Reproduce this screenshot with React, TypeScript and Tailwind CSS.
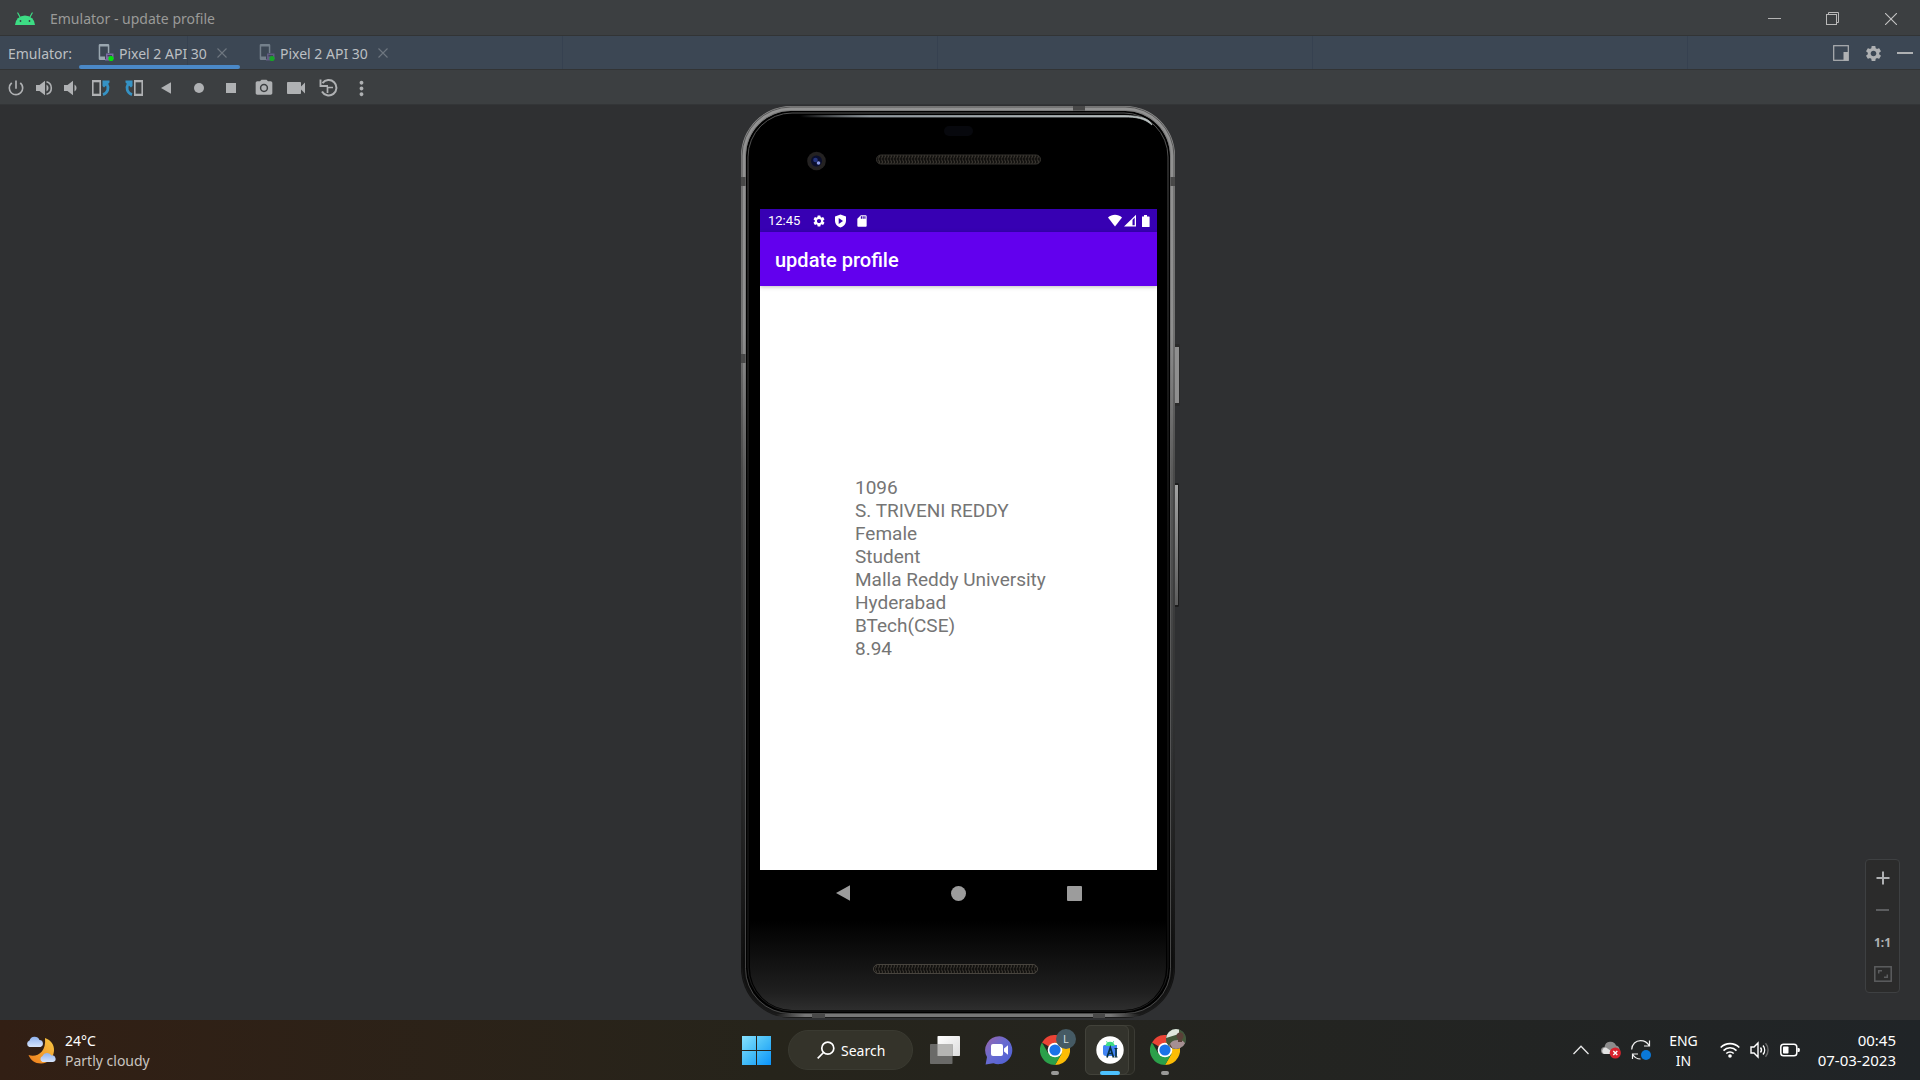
import React from "react";
import {
  MdPowerSettingsNew,
  MdPhotoCamera,
  MdVideocam,
  MdMoreVert,
  MdSettings,
  MdSdCard,
} from "react-icons/md";

const profile = [
  "1096",
  "S. TRIVENI REDDY",
  "Female",
  "Student",
  "Malla Reddy University",
  "Hyderabad",
  "BTech(CSE)",
  "8.94",
];

function IconButton({ label, className, children }: { label: string; className: string; children: React.ReactNode }) {
  return (
    <button type="button" aria-label={label} className={`flex shrink-0 items-center justify-center ${className}`}>
      {children}
    </button>
  );
}

function AndroidHead() {
  return (
    <svg width="20" height="14" viewBox="0 0 20 14" aria-hidden="true">
      <path d="M0 13a10 9.6 0 0 1 20 0z" fill="#3ddc84" />
      <path d="M5 5 2.8 1M15 5l2.2-4" stroke="#3ddc84" strokeWidth="1.2" strokeLinecap="round" />
      <circle cx="5.5" cy="9" r="0.9" fill="#3c3f41" />
      <circle cx="14.5" cy="9" r="0.9" fill="#3c3f41" />
    </svg>
  );
}

function DeviceIcon({ dim }: { dim?: boolean }) {
  return (
    <svg width="17" height="18" viewBox="0 0 17 18" aria-hidden="true" className={dim ? "opacity-60" : ""}>
      <path
        fillRule="evenodd"
        d="M2 0h8a1.300 1.300 0 0 1 1.300 1.300V9H9.800V2.500H2.200v10H7V16H2A1.300 1.300 0 0 1 .7 14.700V1.300A1.300 1.300 0 0 1 2 0z"
        fill="#9aa7b0"
      />
      <path d="M8 9.500h7.500V15H8z" fill="#7d6aa5" />
      <path d="M9.500 11h4.500v1.500H9.500z" fill="#3c4754" />
      <rect x="7" y="15" width="4" height="1.500" fill="#7d6aa5" />
      <circle cx="13" cy="14.500" r="2.600" fill="#00e30b" />
    </svg>
  );
}

function Tab({ active }: { active?: boolean }) {
  return (
    <div className="relative flex w-[161px] items-center pl-[19px]">
      <button type="button" role="tab" aria-selected={!!active} className="flex items-center gap-1">
        <DeviceIcon dim={!active} />
        <span className="w-[90px] text-left whitespace-nowrap">Pixel 2 API 30</span>
      </button>
      <IconButton label="Close tab" className="ml-2 size-[10px]">
        <svg width="10" height="10" viewBox="0 0 10 10" stroke="#6f7780" strokeWidth="1.100" aria-hidden="true">
          <path d="M.5.5l9 9M9.500.5l-9 9" />
        </svg>
      </IconButton>
      {active && <span className="absolute inset-x-0 bottom-0 z-10 h-1 rounded-full bg-[#4a88c7]" />}
    </div>
  );
}

function Speaker({ loud }: { loud?: boolean }) {
  return (
    <svg width="18" height="16" viewBox="0 0 18 16" fill="#afb1b3" aria-hidden="true">
      <path d="M1 5h3.500L10 .8v14.400L4.500 11H1z" />
      <path d="M11.500 4.500a4 4 0 0 1 0 7z" />
      {loud && <path d="M11.500 1.800a6.400 6.400 0 0 1 0 12.400" fill="none" stroke="#afb1b3" strokeWidth="1.600" />}
    </svg>
  );
}

function Rotate({ right }: { right?: boolean }) {
  return (
    <svg width="20" height="16" viewBox="0 0 20 16" aria-hidden="true" className={right ? "-scale-x-100" : ""}>
      <rect x="1.800" y="1.500" width="7.400" height="13" fill="none" stroke="#afb1b3" strokeWidth="1.600" />
      <path d="M1 1h9M1 15h9" stroke="#afb1b3" strokeWidth="2" />
      <path d="M12 14.600c5-1.600 6.200-6.600 3.800-11" fill="none" stroke="#3592c4" strokeWidth="2.800" />
      <path d="M11.500.6h7v1.800L13 7.600 11.500 6z" fill="#3592c4" />
    </svg>
  );
}

function PhoneFrame() {
  return (
    <svg viewBox="0 0 440 915" preserveAspectRatio="none" aria-hidden="true" className="absolute inset-0 h-full w-full">
      <defs>
        <linearGradient id="rim" x1="0" y1="0" x2="0" y2="1">
          <stop offset="0" stopColor="#929292" />
          <stop offset="0.250" stopColor="#8e8e8e" />
          <stop offset="0.400" stopColor="#5a5a5a" />
          <stop offset="0.700" stopColor="#333435" />
          <stop offset="0.850" stopColor="#1c1c1c" />
          <stop offset="0.940" stopColor="#0c0c0c" />
          <stop offset="1" stopColor="#1a1a1a" />
        </linearGradient>
        <linearGradient id="bottomRim" x1="0" y1="0" x2="1" y2="0">
          <stop offset="0" stopColor="#777777" stopOpacity="0" />
          <stop offset="0.080" stopColor="#777777" />
          <stop offset="0.920" stopColor="#777777" />
          <stop offset="1" stopColor="#777777" stopOpacity="0" />
        </linearGradient>
        <linearGradient id="glass" x1="0" y1="0" x2="0" y2="1">
          <stop offset="0" stopColor="#000000" />
          <stop offset="0.900" stopColor="#000000" />
          <stop offset="0.980" stopColor="#1f1f1f" />
          <stop offset="1" stopColor="#2e2e2e" />
        </linearGradient>
        <linearGradient id="shine" x1="0" y1="0" x2="1" y2="0">
          <stop offset="0" stopColor="#8d959b" stopOpacity="0" />
          <stop offset="0.200" stopColor="#8d959b" />
          <stop offset="1" stopColor="#b9c0c0" />
        </linearGradient>
        <linearGradient id="sideEdge" x1="0" y1="0" x2="0" y2="1">
          <stop offset="0" stopColor="#555" />
          <stop offset="0.500" stopColor="#1c1c1c" />
          <stop offset="1" stopColor="#1c1c1c" />
        </linearGradient>
        <linearGradient id="key" x1="0" y1="0" x2="0" y2="1">
          <stop offset="0" stopColor="#a2a2a2" />
          <stop offset="1" stopColor="#5c5c5c" />
        </linearGradient>
        <pattern id="mesh" width="3" height="6" patternUnits="userSpaceOnUse">
          <rect width="3" height="6" fill="#12110f" />
          <path d="M0.500 0.500l1 2.500-1 2.500" stroke="#47433b" strokeWidth="0.900" fill="none" />
        </pattern>
      </defs>
      <rect x="433" y="239" width="7" height="62" rx="1.500" fill="#2a2a2a" />
      <rect x="435" y="242" width="4" height="56" fill="#8f8f8f" />
      <rect x="433" y="378" width="6" height="124" rx="1.500" fill="#1d1d1d" />
      <rect x="434" y="380" width="4" height="120" fill="url(#key)" />
      <rect x="1" y="1" width="434" height="912" rx="50" fill="url(#rim)" />
      <rect x="2" y="2" width="432" height="910" rx="49" fill="none" stroke="#1e1e1e" strokeOpacity="0.500" />
      <rect x="36" y="909" width="364" height="3" fill="url(#bottomRim)" />
      <path d="M1 72h6v9H1zM429 72h6v9h-6zM333 1h12v5h-12zM1 249h5v9H1zM72 909h13v4H72zM353 909h12v4h-12z" fill="#484848" />
      <rect x="6" y="6" width="424" height="902" rx="45" fill="#000" />
      <rect x="5.500" y="5.500" width="425" height="903" rx="45" fill="none" stroke="#6a6a6a" strokeOpacity="0.600" />
      <rect x="8" y="8" width="420" height="898" rx="44" fill="none" stroke="url(#sideEdge)" />
      <rect x="10" y="10" width="416" height="895" rx="42" fill="url(#glass)" />
      <path d="M60 10.500H384C400 10.500 410 14 412 20C404 13 396 12 384 12H60z" fill="url(#shine)" stroke="url(#shine)" strokeWidth="0.800" />
      <rect x="204" y="21" width="29" height="10" rx="5" fill="#07080d" />
      <circle cx="76.500" cy="56" r="9.300" fill="#242222" />
      <circle cx="76.500" cy="56" r="5.500" fill="#0a0e2c" />
      <circle cx="75.500" cy="55" r="2.300" fill="#25357e" />
      <circle cx="78.500" cy="58" r="1.800" fill="#8b9be8" />
      <rect x="136.500" y="50" width="164" height="9" rx="4.500" fill="url(#mesh)" stroke="#35332f" />
      <rect x="133.500" y="859.500" width="164" height="9" rx="4.500" fill="url(#mesh)" stroke="#48443e" />
    </svg>
  );
}

function Phone() {
  return (
    <div className="relative flex w-[440px] flex-col pt-[104px] pr-[23px] pl-5">
      <PhoneFrame />
      <div className="relative flex min-h-[661px] flex-col bg-white font-[Roboto,sans-serif]">
        <div className="flex h-[23px] items-center bg-[#3700b3] pr-[7px] pl-2 text-white">
          <span className="w-[44px] text-[13px]">12:45</span>
          <MdSettings size={14} className="mr-2" aria-hidden="true" />
          <svg width="13" height="14" viewBox="0 0 13 14" className="mr-2" aria-hidden="true">
            <path fillRule="evenodd" d="M6.500.4 12 2.500v4.300c0 3-2.300 5.800-5.500 6.700C3.300 12.600 1 9.800 1 6.800V2.500zM4.700 4v6l4.300-3z" fill="#fff" />
          </svg>
          <MdSdCard size={14} aria-hidden="true" />
          <svg width="42" height="14" viewBox="0 0 42 14" className="ml-auto" fill="#fff" aria-hidden="true">
            <path d="M0 3.500C4-.2 10-.2 14 3.500L7 12.500z" />
            <path d="M16 12.500 28 .8v11.700zM24.500 6v5.300h2.200V3.600z" fillRule="evenodd" />
            <path d="M34 2.500h2V1h3v1.500h2a.6.6 0 0 1 .6.6v9.300a.6.6 0 0 1-.6.6h-6.400a.6.6 0 0 1-.6-.6z" />
          </svg>
        </div>
        <header className="flex h-[54px] items-center bg-[#6200ee] pt-[2px] pl-[15px] shadow-[0_1px_4px_rgba(0,0,0,0.25)]">
          <h1 className="text-[20px] font-medium text-white">update profile</h1>
        </header>
        <ul className="mt-[190px] ml-[95px] text-[19px] leading-[23px] text-[#757575]">
          {profile.map((line) => (
            <li key={line}>{line}</li>
          ))}
        </ul>
      </div>
      <nav aria-label="Device navigation" className="relative flex h-[46px] items-center justify-between px-[67px]">
        <IconButton label="Back" className="size-8">
          <svg width="16" height="16" viewBox="0 0 16 16" aria-hidden="true">
            <path d="M1 8 15 .3v15.400z" fill="#9c9c9c" />
          </svg>
        </IconButton>
        <IconButton label="Home" className="size-8">
          <span className="size-[15px] rounded-full bg-[#9c9c9c]" />
        </IconButton>
        <IconButton label="Overview" className="size-8">
          <span className="size-[15px] rounded-[1px] bg-[#9c9c9c]" />
        </IconButton>
      </nav>
    </div>
  );
}

function Chrome() {
  return (
    <svg width="30" height="30" viewBox="0 0 30 30" aria-hidden="true">
      <path d="M15 15 2 7.500A15 15 0 0 1 28 7.500H15z" fill="#ea4335" />
      <path d="M15 15 28 7.500A15 15 0 0 1 15 30l6.500-11.200z" fill="#fbbc05" />
      <path d="M15 15l6.500 3.800L15 30A15 15 0 0 1 2 7.500l6.500 11.300z" fill="#2ba04a" />
      <path d="M15 7.500h13a15 15 0 0 1 1.400 3H18z" fill="#fbbc05" />
      <circle cx="15" cy="15" r="7.300" fill="#fff" />
      <circle cx="15" cy="15" r="5.600" fill="#1a73e8" />
    </svg>
  );
}

function ChromeButton({ badge, label }: { badge: React.ReactNode; label: string }) {
  return (
    <button type="button" aria-label={label} className="relative flex h-[50px] w-9 shrink-0 items-center">
      <Chrome />
      <span className="absolute top-1 right-0 flex size-5 items-center justify-center overflow-hidden rounded-full bg-[#455a64] text-[11px] text-[#cfd8dc]">
        {badge}
      </span>
      <span className="absolute bottom-0 left-[11px] h-1 w-2 rounded-full bg-[#9a9a98]" />
    </button>
  );
}

function Taskbar() {
  return (
    <footer className="grid h-[60px] grid-cols-[1fr_auto_1fr] items-center bg-linear-to-r from-[#321f14] via-[#26241b] via-40% to-[#202427] text-[14px] leading-5 text-white">
      <button type="button" className="flex items-center gap-2 justify-self-start pt-px pl-[26px] text-left">
        <svg width="31" height="30" viewBox="0 0 31 30" aria-hidden="true">
          <defs>
            <linearGradient id="moon" x1="1" y1="0" x2="0" y2="1">
              <stop offset="0" stopColor="#f6c945" />
              <stop offset="1" stopColor="#ef7a1a" />
            </linearGradient>
            <linearGradient id="cloud" x1="0" y1="0" x2="0" y2="1">
              <stop offset="0" stopColor="#8fb2ee" />
              <stop offset="1" stopColor="#d6e4fb" />
            </linearGradient>
          </defs>
          <path d="M19 2c6 2 9.500 7 9 13-.6 7-6 12.500-13 12.500C9 27.500 4.500 24 2.500 19c8 2.500 18-2 16.500-17z" fill="url(#moon)" />
          <path d="M3.500 11a3.400 3.400 0 0 1 0-6.500A5.300 5.300 0 0 1 13.500 4a3.600 3.600 0 0 1 1 7z" fill="url(#cloud)" />
          <path d="M16.500 26a3.200 3.200 0 0 1 0-6 5 5 0 0 1 9-.5 3.300 3.300 0 0 1 1.500 6.500z" fill="url(#cloud)" />
        </svg>
        <span className="flex flex-col">
          <span>24°C</span>
          <span className="text-[#c9c4c0]">Partly cloudy</span>
        </span>
      </button>

      <div className="flex items-center">
        <IconButton label="Start" className="h-[50px] w-[45px]">
          <svg width="29" height="29" viewBox="0 0 29 29" aria-hidden="true">
            <defs>
              <linearGradient id="win" gradientUnits="userSpaceOnUse" x1="0" y1="0" x2="29" y2="29">
                <stop offset="0" stopColor="#86e1ff" />
                <stop offset="0.500" stopColor="#45bdf7" />
                <stop offset="1" stopColor="#0a93fb" />
              </linearGradient>
            </defs>
            <path d="M0 0h14v14H0zM15 0h14v14H15zM0 15h14v14H0zM15 15h14v14H15z" fill="url(#win)" />
          </svg>
        </IconButton>
        <button
          type="button"
          className="ml-[9px] flex h-10 w-[125px] items-center gap-[6px] rounded-full border border-[#3a3a31] bg-[#34332a] pl-7"
        >
          <svg width="18" height="18" viewBox="0 0 18 18" fill="none" stroke="#fff" strokeWidth="1.700" aria-hidden="true">
            <circle cx="10.800" cy="7.200" r="6" />
            <path d="M6.500 11.500.7 17.300" />
          </svg>
          <span className="pt-px">Search</span>
        </button>
        <IconButton label="Task view" className="ml-[17px] h-[50px] w-[30px]">
          <svg width="30" height="28" viewBox="0 0 30 28" aria-hidden="true">
            <defs>
              <linearGradient id="pane" x1="0" y1="0" x2="1" y2="1">
                <stop offset="0" stopColor="#ffffff" />
                <stop offset="1" stopColor="#dcdcdc" />
              </linearGradient>
            </defs>
            <rect x="7.500" y="0" width="22.500" height="20" rx="0.800" fill="url(#pane)" />
            <rect x="0" y="8" width="22.500" height="20" rx="0.800" fill="#6a6a68" />
            <rect x="7.500" y="8" width="15" height="12" fill="#b5b5b3" />
          </svg>
        </IconButton>
        <IconButton label="Chat" className="ml-[25px] h-[50px] w-[29px]">
          <svg width="29" height="29" viewBox="0 0 29 29" aria-hidden="true">
            <defs>
              <linearGradient id="chat" x1="0" y1="0" x2="1" y2="1">
                <stop offset="0" stopColor="#9a64a8" />
                <stop offset="0.450" stopColor="#6a6bd0" />
                <stop offset="1" stopColor="#4a5fd6" />
              </linearGradient>
            </defs>
            <path d="M14.500.2A14 14 0 1 1 8.500 27.300L.6 28.400 2 21A14 14 0 0 1 14.500.2z" fill="url(#chat)" />
            <rect x="6" y="8" width="12" height="12" rx="2" fill="#fff" />
            <path d="M19 12.500 23 9.300v9.400l-4-3.200z" fill="#fff" />
          </svg>
        </IconButton>
        <div className="ml-[26px]">
          <ChromeButton label="Google Chrome, profile L" badge="L" />
        </div>
        <button
          type="button"
          aria-label="Android Studio"
          className="relative ml-[9px] h-[50px] w-[50px] rounded-md border border-[#3b3b34] bg-[#2a2a23]"
        >
          <span className="absolute -top-px -left-px flex h-[50px] w-[44px] items-center justify-center rounded-md border border-[#42423a] bg-[#33332c]">
            <svg width="28" height="28" viewBox="0 0 28 28" className="ml-[6px]" aria-hidden="true">
              <circle cx="14" cy="14" r="13.700" fill="#fff" />
              <path d="M7 10.500A1.500 1.500 0 0 1 8.500 9H21v11H10a3 3 0 0 1-3-3z" fill="#4285f4" />
              <path d="M9.500 10a4.600 4.300 0 0 1 9.200 0z" fill="#3ddc84" />
              <path d="M10.500 5.200l1 2M17.700 5.200l-1 2" stroke="#3ddc84" strokeWidth="0.900" />
              <path d="M11 21.500 14.300 11.500 17.500 21.500M12.300 17.500h4" stroke="#073042" strokeWidth="1.700" fill="none" />
              <path d="M18.500 12h3v1h-.7v7.500h.7v1h-3v-1h.7V13h-.7z" fill="#073042" />
            </svg>
          </span>
          <span className="absolute -bottom-px left-[14px] h-1 w-5 rounded-full bg-[#4cc2ff]" />
        </button>
        <div className="ml-[15px]">
          <ChromeButton
            label="Google Chrome, second profile"
            badge={
              <svg width="20" height="20" viewBox="0 0 20 20" aria-hidden="true">
                <rect width="20" height="20" fill="#44583a" />
                <path d="M0 0h13v5L0 9z" fill="#dfe6dc" />
                <path d="M3 20c0-6 3-9 9-9s8 3 8 9z" fill="#a58f92" />
                <circle cx="14" cy="7" r="3.500" fill="#5a4038" />
                <path d="M12 10h4v3h-4z" fill="#5a4038" />
                <path d="M4 15l3 5H4z" fill="#5a4038" />
              </svg>
            }
          />
        </div>
      </div>

      <div className="flex items-center justify-self-end pr-6">
        <IconButton label="Show hidden icons" className="h-10 w-4">
          <svg width="16" height="10" viewBox="0 0 16 10" fill="none" stroke="#e8e8e8" strokeWidth="1.300" aria-hidden="true">
            <path d="M.5 9 8 1.200 15.500 9" />
          </svg>
        </IconButton>
        <IconButton label="OneDrive" className="ml-3 h-10 w-5">
          <svg width="20" height="18" viewBox="0 0 20 18" aria-hidden="true">
            <path d="M3.500 13a3.500 3.500 0 0 1 0-7A6 6 0 0 1 15 4.500a4.500 4.500 0 0 1 1 8.500z" fill="#8c8c8c" />
            <path d="M3 13a3.500 3.500 0 0 1 2-6.500L13 12l-3 1z" fill="#e2e2e2" />
            <circle cx="14.300" cy="12" r="5.600" fill="#d9232e" />
            <path d="m12.300 10 4 4M16.300 10l-4 4" stroke="#fff" strokeWidth="1.400" />
          </svg>
        </IconButton>
        <IconButton label="Updates" className="ml-[10px] h-10 w-5">
          <svg width="20" height="22" viewBox="0 0 20 22" fill="none" stroke="#f0f0f0" strokeWidth="1.200" aria-hidden="true">
            <path d="M.7 10.500C1 5 4.800 1.700 9.500 1.700c4 0 7 2 8.700 5M18.500 1.500V7H13M1.500 20v-5H7M1.700 15.500C3.500 18.500 6 20 9.500 20" />
            <circle cx="15" cy="16" r="5" fill="#0a78d8" stroke="none" />
          </svg>
        </IconButton>
        <button type="button" aria-label="Input language" className="ml-4 w-[33px] pt-px text-center">
          ENG
          <br />
          IN
        </button>
        <button type="button" aria-label="Network, volume and battery" className="ml-5 flex w-20 items-center justify-between">
          <svg width="20" height="16" viewBox="0 0 20 16" fill="none" stroke="#fff" strokeWidth="1.600" aria-hidden="true">
            <path d="M.7 5.500a13 13 0 0 1 18.600 0M3.500 8.600a9 9 0 0 1 13 0M6.300 11.500a5.200 5.200 0 0 1 7.400 0" />
            <circle cx="10" cy="14" r="1.800" fill="#fff" stroke="none" />
          </svg>
          <svg width="20" height="18" viewBox="0 0 20 18" fill="none" stroke="#fff" strokeWidth="1.400" aria-hidden="true">
            <path d="M1 6h3l4-4v14l-4-4H1zM10.500 6.500a4 4 0 0 1 0 5M13 4.500a7 7 0 0 1 0 9" />
            <path d="M15.500 2.300a10 10 0 0 1 0 13.400" stroke="#6b6b6b" />
          </svg>
          <svg width="20" height="14" viewBox="0 0 20 14" aria-hidden="true">
            <rect x="0.800" y="1.300" width="16" height="11.400" rx="2.800" fill="none" stroke="#fff" strokeWidth="1.500" />
            <rect x="3" y="3.500" width="5.500" height="7" rx="0.800" fill="#fff" />
            <path d="M17.500 5h1a1.300 1.300 0 0 1 1.300 1.300v1.400A1.300 1.300 0 0 1 18.500 9h-1z" fill="#fff" />
          </svg>
        </button>
        <button type="button" aria-label="Clock" className="ml-4 min-w-20 text-right text-[15px] leading-5">
          00:45
          <br />
          07-03-2023
        </button>
      </div>
    </footer>
  );
}

export default function App() {
  return (
    <div className="flex min-h-screen flex-col bg-[#2f3032] font-['Noto_Sans',sans-serif] text-[14px]">
      <div className="flex h-9 items-center border-b border-[#323435] bg-[#3c3f41] pt-[2px] pl-[15px]">
        <AndroidHead />
        <span className="ml-[15px] text-[#9a9a98]">Emulator - update profile</span>
        <div className="ml-auto flex items-center">
          <IconButton label="Minimize" className="h-8 w-[58px]">
            <span className="h-px w-[13px] bg-[#b4b4b4]" />
          </IconButton>
          <IconButton label="Restore" className="h-8 w-[59px]">
            <svg width="13" height="13" viewBox="0 0 13 13" fill="none" stroke="#b9b9b9" aria-hidden="true">
              <rect x="0.500" y="2.500" width="10" height="10" />
              <path d="M2.500 2.500v-2h10v10h-2" />
            </svg>
          </IconButton>
          <IconButton label="Close" className="h-8 w-[58px]">
            <svg width="12" height="12" viewBox="0 0 12 12" stroke="#c4c4c4" strokeWidth="1.100" aria-hidden="true">
              <path d="M0 0l12 12M12 0 0 12" />
            </svg>
          </IconButton>
        </div>
      </div>

      <div className="relative flex h-[34px] items-stretch overflow-hidden border-b border-[#323435] bg-[#3c4754] pt-px text-[#bbbfc2]">
        <span className="flex w-[79px] items-center pl-2">Emulator:</span>
        <div role="tablist" aria-label="Running devices" className="flex">
          <Tab active />
          <Tab />
        </div>
        <div className="ml-auto flex items-center gap-4 pr-[7px]">
          <IconButton label="Window mode" className="size-4">
            <svg width="16" height="16" viewBox="0 0 16 16" aria-hidden="true">
              <rect x="0.700" y="0.700" width="14.600" height="14.600" fill="none" stroke="#afb1b3" strokeWidth="1.200" />
              <path d="M10.500 7H15v8.500h-4.500z" fill="#afb1b3" />
            </svg>
          </IconButton>
          <IconButton label="Settings" className="size-4">
            <MdSettings size={19} color="#afb1b3" className="shrink-0" />
          </IconButton>
          <IconButton label="Hide" className="size-4">
            <span className="h-[2px] w-4 bg-[#afb1b3]" />
          </IconButton>
        </div>
        <div aria-hidden="true" className="pointer-events-none absolute inset-0 flex pl-[187px]">
          {[0, 1, 2, 3, 4].map((n) => (
            <span key={n} className="w-[375px] shrink-0 border-l border-[#364150]" />
          ))}
        </div>
      </div>

      <div className="flex h-[35px] items-center border-b border-[#333537] bg-[#3c3f41] pt-[2px] pl-[2px] text-[#afb1b3]">
        <IconButton label="Power" className="h-6 w-7">
          <MdPowerSettingsNew size={20} />
        </IconButton>
        <IconButton label="Volume up" className="h-6 w-7">
          <Speaker loud />
        </IconButton>
        <IconButton label="Volume down" className="h-6 w-7">
          <Speaker />
        </IconButton>
        <div className="ml-[3px] flex w-[284px] justify-between">
          <IconButton label="Rotate left" className="size-6">
            <Rotate />
          </IconButton>
          <IconButton label="Rotate right" className="size-6">
            <Rotate right />
          </IconButton>
          <IconButton label="Back" className="size-6">
            <svg width="10" height="12" viewBox="0 0 10 12" fill="#afb1b3" aria-hidden="true">
              <path d="M0 6 10 .3v11.400z" />
            </svg>
          </IconButton>
          <IconButton label="Home" className="size-6">
            <span className="size-[10px] rounded-full bg-[#afb1b3]" />
          </IconButton>
          <IconButton label="Overview" className="size-6">
            <span className="size-[10px] bg-[#afb1b3]" />
          </IconButton>
          <IconButton label="Take screenshot" className="size-6">
            <MdPhotoCamera size={20} />
          </IconButton>
          <IconButton label="Record screen" className="size-6">
            <MdVideocam size={24} />
          </IconButton>
          <IconButton label="Snapshots" className="size-6">
            <svg width="19" height="18" viewBox="0 0 19 18" fill="none" stroke="#afb1b3" strokeWidth="2" aria-hidden="true">
              <path d="M3.500 4.200A7.700 7.700 0 1 1 3 12.500" />
              <path d="M1.500 0.500V7H9" strokeWidth="1.900" />
              <path d="M8.500 14V8.500H14" strokeWidth="1.700" />
            </svg>
          </IconButton>
          <IconButton label="More" className="size-6">
            <MdMoreVert size={23} />
          </IconButton>
        </div>
      </div>

      <main className="relative flex flex-1 justify-center">
        <Phone />
        <div className="absolute right-5 bottom-[27px] flex w-[35px] flex-col items-center rounded border border-[#3e4042] bg-[#2b2b2b] py-[2px]">
          <IconButton label="Zoom in" className="size-8">
            <svg width="14" height="14" viewBox="0 0 14 14" stroke="#afb1b3" strokeWidth="2" aria-hidden="true">
              <path d="M7 .5v13M.5 7h13" />
            </svg>
          </IconButton>
          <IconButton label="Zoom out" className="size-8">
            <span className="h-[2px] w-[13px] bg-[#5c5d5f]" />
          </IconButton>
          <button type="button" aria-label="Actual size" className="size-8 pt-px text-[12px] font-bold text-[#afb1b3]">
            1:1
          </button>
          <IconButton label="Fit to screen" className="size-8">
            <svg width="18" height="16" viewBox="0 0 18 16" fill="none" stroke="#5c5d5f" aria-hidden="true">
              <rect x="0.800" y="0.800" width="16.400" height="14.400" strokeWidth="1.500" />
              <path d="M4.700 7.500V4.700H8M13.300 8.500v2.800H10" strokeWidth="1.500" />
            </svg>
          </IconButton>
        </div>
      </main>

      <Taskbar />
    </div>
  );
}
